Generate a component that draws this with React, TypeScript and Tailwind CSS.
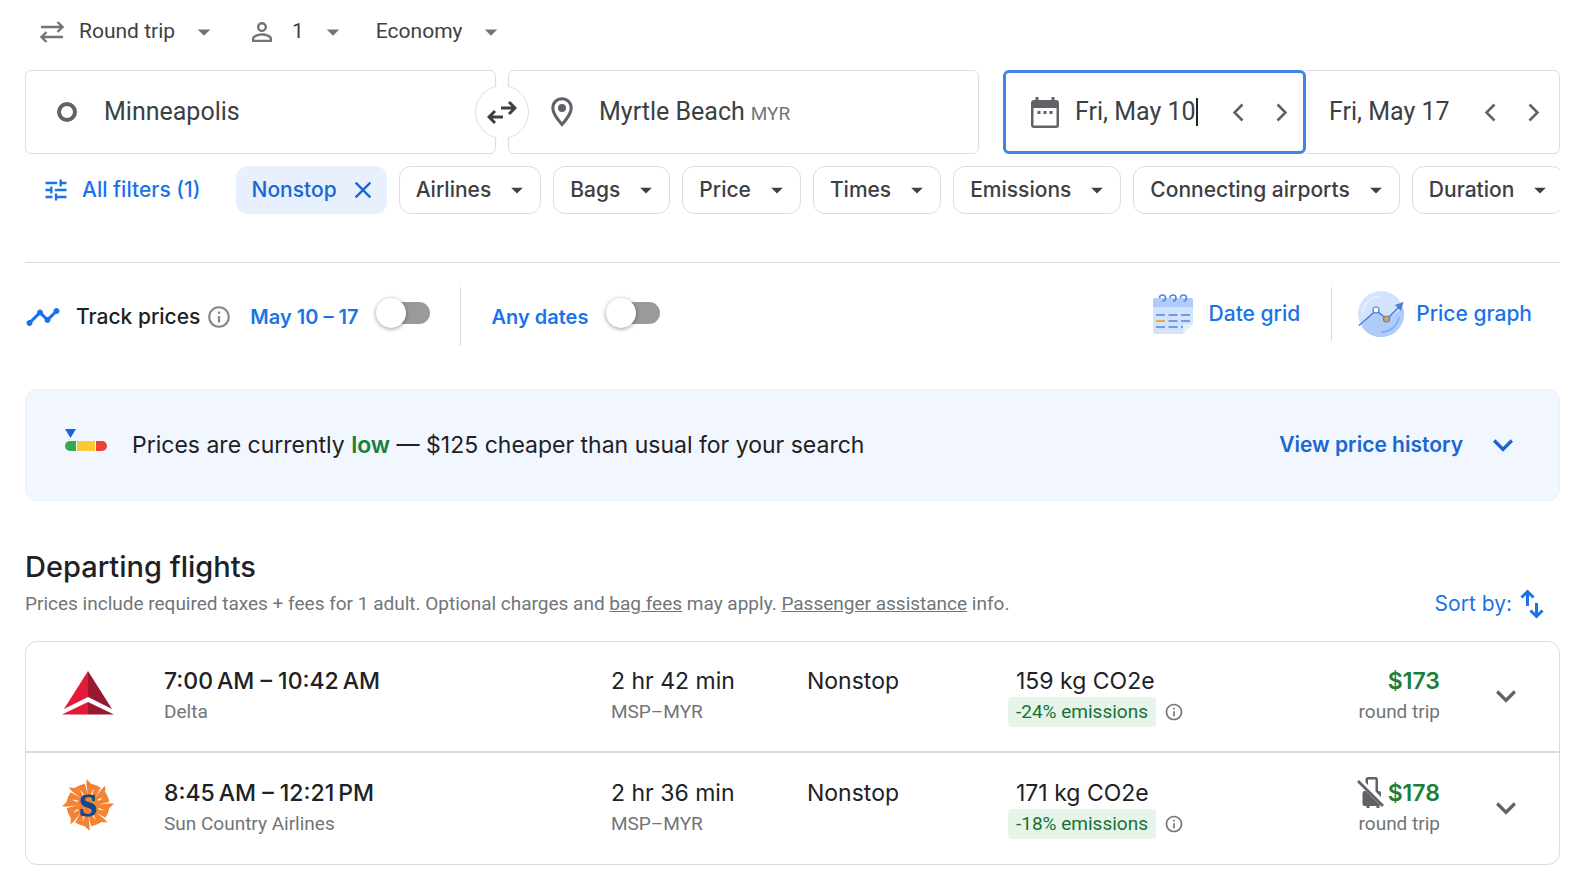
import React from 'react';
import { MdArrowDropDown, MdClose, MdExpandMore, MdInfoOutline, MdPersonOutline, MdTimeline, MdTune } from 'react-icons/md';

const tripOptions = [
  { label: 'Trip type', value: 'Round trip', others: ['One way', 'Multi-city'] },
  { label: 'Passengers', value: '1', others: ['2', '3', '4'] },
  { label: 'Seating class', value: 'Economy', others: ['Premium economy', 'Business', 'First'] },
];

const filters = ['Airlines', 'Bags', 'Price', 'Times', 'Emissions', 'Connecting airports', 'Duration'];

const RoundTripIcon = () => (
  <svg viewBox="0 0 24 24" className="h-6 w-6" fill="none" stroke="#70757a" strokeWidth="2.400" aria-hidden="true">
    <path d="M1 7h21M17.500 2l5 5-5 5M23 17H2M6.500 12l-5 5 5 5" />
  </svg>
);

const SwapIcon = () => (
  <svg viewBox="0 0 30 26" className="h-[26px] w-[30px]" fill="none" stroke="#3c4043" strokeWidth="3" aria-hidden="true">
    <path d="M14 9h14M22 3l6 6-6 6M16 18H2M8 12l-6 6 6 6" />
  </svg>
);

const PinIcon = () => (
  <svg viewBox="0 0 22 30" className="h-[30px] w-[22px] shrink-0" fill="none" aria-hidden="true">
    <path d="M11 1.700A9.200 9.200 0 0 0 1.800 11C1.800 17.500 11 27.500 11 27.500S20.200 17.500 20.200 11A9.200 9.200 0 0 0 11 1.700z" stroke="#5f6368" strokeWidth="3" />
    <circle cx="11" cy="11" r="4" fill="#5f6368" />
  </svg>
);

const CalendarIcon = () => (
  <svg viewBox="0 0 28 31" className="h-[31px] w-7" fill="#5f6368" aria-hidden="true">
    <path d="M4.500 0h3v3h13V0h3v3H25a3 3 0 0 1 3 3v22a3 3 0 0 1-3 3H3a3 3 0 0 1-3-3V6a3 3 0 0 1 3-3h1.500zM2.500 11v17.500h23V11z" />
    <path d="M6.500 14h3v3h-3zM12.500 14h3v3h-3zM18.500 14h3v3h-3z" />
  </svg>
);

const DateGridIcon = () => (
  <svg viewBox="0 0 40 40" className="h-10 w-10" fill="none" aria-hidden="true">
    <path d="M0 6a2 2 0 0 1 2-2h36a2 2 0 0 1 2 2v24L30 40H2a2 2 0 0 1-2-2z" fill="#d2e3fc" />
    <path d="M0 6a2 2 0 0 1 2-2h36a2 2 0 0 1 2 2v7H0z" fill="#aecbfa" />
    <path d="M30 40v-8a2 2 0 0 1 2-2h8z" fill="#e8f0fe" />
    <path
      d="M6.500 4a3 3 0 1 1 3 3M17 4a3 3 0 1 1 3 3M27.500 4a3 3 0 1 1 3 3"
      stroke="#5583dc"
      strokeWidth="1.500"
    />
    <path d="M3 21h9M15.500 21h9M28 21h9M15.500 27h9M28 27h9M3 33h9M15.500 33h9M28 33h2" stroke="#5583dc" strokeWidth="1.500" />
    <path d="M3 27h9" stroke="#e8ab4b" strokeWidth="2" />
  </svg>
);

const PriceGraphIcon = () => (
  <svg viewBox="0 0 46 46" className="h-[46px] w-[46px]" fill="none" aria-hidden="true">
    <circle cx="23" cy="23" r="23" fill="#d2e3fc" />
    <path d="M4 33.500 18 20l10.500 8.500L45.200 17A23 23 0 0 1 4 36z" fill="#aecbfa" />
    <path d="M5 23A18 18 0 0 1 22 5" stroke="#e8f0fe" strokeWidth="1.500" />
    <path d="M41 26a18 18 0 0 1-18 15" stroke="#7baaf7" strokeWidth="1.500" />
    <path d="m1 34.500 17-15 11 8.500 12-12" stroke="#4f7bd3" strokeWidth="1.500" />
    <path d="m37 14 8.500-3-2.500 9z" fill="#4f7bd3" />
    <circle cx="18" cy="19" r="3" fill="#fff" stroke="#4f7bd3" strokeWidth="1.200" />
    <circle cx="28.500" cy="28" r="3" fill="#e8a33d" stroke="#6b7fa8" strokeWidth="1.200" />
  </svg>
);

const PriceLevelIcon = () => (
  <svg viewBox="0 0 42 32" className="h-8 w-[42px]" aria-hidden="true">
    <path d="M0 0h11L5.500 9z" fill="#1967d2" />
    <path d="M5 12h6v10H5a5 5 0 0 1 0-10z" fill="#34a853" />
    <path d="M12 12h18v10H12z" fill="#fbc934" />
    <path d="M31 12h6a5 5 0 0 1 0 10h-6z" fill="#ea4335" />
  </svg>
);

const SortIcon = () => (
  <svg viewBox="0 0 24 30" className="h-[30px] w-6" fill="none" stroke="#1a73e8" strokeWidth="3" aria-hidden="true">
    <path d="M7.500 17V3M1.500 8.500l6-6 6 6M16.500 14v13M10.500 21.500l6 6 6-6" />
  </svg>
);

const NoCarryOnIcon = () => (
  <svg viewBox="0 0 27 31" className="h-[31px] w-[27px]" fill="#5f6368" role="img" aria-label="No carry-on bag">
    <path d="M8.500 5.500v-3A2.500 2.500 0 0 1 11 0h7.500A2.500 2.500 0 0 1 21 2.500V14h1a2 2 0 0 1 2 2v4L18.500 14.500V2.500H11V8z" />
    <path d="M9 14 23.500 28.500h-1V31h-3v-2h-7v2h-3v-2h-2a2 2 0 0 1-2-2V16a2 2 0 0 1 2-2z" />
    <path d="m0 5 2-2 25 25-2 2z" />
  </svg>
);

const DeltaLogo = () => (
  <svg viewBox="0 0 52 44" className="h-11 w-[52px]" aria-hidden="true">
    <path d="M26 0v26L2 38z" fill="#e51937" />
    <path d="M26 0v26l24 12z" fill="#991933" />
    <path d="M26 31v12.500H0z" fill="#e51937" />
    <path d="M26 31v12.500h26z" fill="#991933" />
  </svg>
);

const rays = [0, 45, 90, 135, 180, 225, 270, 315];

const SunCountryLogo = () => (
  <svg viewBox="0 0 52 52" className="h-[52px] w-[52px]" aria-hidden="true">
    <circle cx="26" cy="26" r="21.500" fill="#f58232" />
    {rays.map((angle) => (
      <g key={angle} transform={`rotate(${angle - 3} 26 26)`}>
        <path d="M25 8 26 0l5 6z" fill="#f58232" />
        <path d="M23.800 4h1.600l.800 11z" fill="#fff" />
        <path d="m31.800 9.500-2 6 1 .5zM20 10.500l2.200 5-1 .5z" fill="#fff" />
      </g>
    ))}
    <text
      x="26"
      y="36.500"
      textAnchor="middle"
      fontFamily="Liberation Serif, serif"
      fontWeight="bold"
      fontSize="32"
      fill="#0b4a8f"
      stroke="#0b4a8f"
    >
      S
    </text>
  </svg>
);

const flights = [
  {
    airline: 'Delta',
    logo: DeltaLogo,
    times: '7:00\u202fAM – 10:42\u202fAM',
    duration: '2 hr 42 min',
    co2: '159 kg CO2e',
    emissions: '-24% emissions',
    price: '$173',
    noCarryOn: false,
  },
  {
    airline: 'Sun Country Airlines',
    logo: SunCountryLogo,
    times: '8:45\u202fAM – 12:21\u202fPM',
    duration: '2 hr 36 min',
    co2: '171 kg CO2e',
    emissions: '-18% emissions',
    price: '$178',
    noCarryOn: true,
  },
];

const Toggle = ({ label }: { label: string }) => (
  <label className="flex cursor-pointer items-center gap-[18px]">
    <span className="text-xl font-semibold text-[#1a73e8]">{label}</span>
    <span className="relative mb-2 flex h-[30px] w-[54px] items-center justify-end">
      <input type="checkbox" className="peer sr-only" />
      <span className="h-[22px] w-11 rounded-full bg-[#9a9a9a] peer-checked:bg-blue-300" />
      <span className="absolute left-0 h-[30px] w-[30px] rounded-full bg-white shadow-[0_1px_4px_rgba(0,0,0,0.4)] peer-checked:left-6" />
    </span>
  </label>
);

const DateStepper = ({ name }: { name: string }) => (
  <div className="flex gap-[10px]">
    <button type="button" aria-label={`${name}, one day earlier`}>
      <svg viewBox="0 0 34 34" className="h-[34px] w-[34px]" fill="none" stroke="#5f6368" strokeWidth="2.600">
        <path d="m21.500 9.500-8 8 8 8" />
      </svg>
    </button>
    <button type="button" aria-label={`${name}, one day later`}>
      <svg viewBox="0 0 34 34" className="h-[34px] w-[34px]" fill="none" stroke="#5f6368" strokeWidth="2.600">
        <path d="m12.500 9.500 8 8-8 8" />
      </svg>
    </button>
  </div>
);

const SearchForm = () => (
  <form>
    <div className="flex h-16 items-center gap-7 pl-[15px]">
      {tripOptions.map((option, index) => (
        <label key={option.label} className="relative flex items-center gap-[15px]">
          {index === 0 && <RoundTripIcon />}
          {index === 1 && <MdPersonOutline size={30} className="text-[#70757a]" />}
          <select
            aria-label={option.label}
            defaultValue={option.value}
            className="field-sizing-content appearance-none bg-transparent pr-11 text-[21px] text-[#3c4043] outline-none"
          >
            <option>{option.value}</option>
            {option.others.map((other) => (
              <option key={other}>{other}</option>
            ))}
          </select>
          <MdArrowDropDown size={30} className="pointer-events-none absolute right-0 text-[#70757a]" />
        </label>
      ))}
    </div>

    <div className="mt-[6px] grid grid-cols-[954fr_557fr] gap-6 text-[25px] text-[#3c4043]">
      <div className="relative grid h-21 grid-cols-2 gap-3">
        <label className="flex min-w-0 items-center gap-[27px] rounded-md border border-[#dadce0] pl-[31px]">
          <span className="h-5 w-5 shrink-0 rounded-full border-4 border-[#5f6368]" />
          <input aria-label="Where from?" defaultValue="Minneapolis" className="w-full min-w-0 outline-none" />
        </label>
        <label className="flex min-w-0 items-center gap-[26px] rounded-md border border-[#dadce0] pl-[42px]">
          <PinIcon />
          <span className="flex items-baseline gap-[6px]">
            <input aria-label="Where to?" defaultValue="Myrtle Beach" className="field-sizing-content outline-none" />
            <span className="text-[19px] text-[#70757a]">MYR</span>
          </span>
        </label>
        <div className="absolute inset-y-0 left-1/2 flex w-[54px] -translate-x-1/2 items-center">
          <div className="h-[54px] w-full rounded-full border border-[#dadce0] bg-white" />
          <button
            type="button"
            aria-label="Swap origin and destination"
            className="absolute left-1/2 flex h-14 w-[10px] -translate-x-1/2 items-center justify-center bg-white"
          >
            <span className="shrink-0">
              <SwapIcon />
            </span>
          </button>
        </div>
      </div>

      <div className="grid h-21 grid-cols-[303fr_254fr]">
        <div className="flex items-center justify-between rounded-md border-[3px] border-[#4285e8] pr-1 pl-[25px]">
          <label className="flex items-center gap-4">
            <CalendarIcon />
            <span className="flex items-center">
              <input aria-label="Departure" defaultValue="Fri, May 10" className="field-sizing-content outline-none" />
              <span className="h-7 w-[2px] bg-[#202124]" />
            </span>
          </label>
          <DateStepper name="Departure" />
        </div>
        <div className="flex items-center justify-between rounded-r-md border border-l-0 border-[#dadce0] pr-2 pl-[23px]">
          <input aria-label="Return" defaultValue="Fri, May 17" className="field-sizing-content outline-none" />
          <DateStepper name="Return" />
        </div>
      </div>
    </div>
  </form>
);

const FilterBar = () => (
  <div className="mt-3 flex h-12 gap-3 overflow-hidden font-[Inter,sans-serif] text-[21px] font-medium whitespace-nowrap">
    <button type="button" className="mr-[23px] flex shrink-0 items-center gap-3 pl-[17px] text-[#1a73e8]">
      <MdTune size={28} />
      All filters (1)
    </button>
    <button type="button" className="flex shrink-0 items-center gap-3 rounded-xl bg-[#e8f0fe] pr-[10px] pl-4 text-[#1967d2]">
      Nonstop
      <MdClose size={28} />
    </button>
    {filters.map((filter) => (
      <button
        key={filter}
        type="button"
        className="flex shrink-0 items-center gap-3 rounded-xl border border-[#dadce0] pr-[9px] pl-4 text-[#3c4043]"
      >
        {filter}
        <MdArrowDropDown size={28} />
      </button>
    ))}
  </div>
);

const TrackPrices = () => (
  <section className="mt-12 flex justify-between border-t border-[#dadce0] pt-6 font-[Inter,sans-serif]">
    <div className="flex h-[59px] items-center">
      <MdTimeline size={36} className="text-[#1a73e8]" />
      <h2 className="ml-[15px] text-[21px] font-medium text-[#202124]">Track prices</h2>
      <MdInfoOutline size={26} className="mr-[18px] ml-[6px] text-[#80868b]" aria-label="About price tracking" />
      <Toggle label="May 10 – 17" />
      <span className="mx-[30px] h-full border-l border-[#dadce0]" />
      <Toggle label="Any dates" />
    </div>
    <div className="flex h-[54px] items-center pr-7 text-[21px] font-medium text-[#1a73e8]">
      <button type="button" className="flex items-center gap-4">
        <DateGridIcon />
        Date grid
      </button>
      <span className="mr-[26px] ml-[31px] h-full border-l border-[#dadce0]" />
      <button type="button" className="flex items-center gap-3">
        <PriceGraphIcon />
        Price graph
      </button>
    </div>
  </section>
);

const PriceInsight = () => (
  <section className="mt-[43px] flex h-28 items-center rounded-xl border border-[#e8f0fe] bg-[#f2f6fe] pr-9 pl-[39px] font-[Inter,sans-serif]">
    <PriceLevelIcon />
    <p className="ml-[25px] text-[23px] text-[#202124]">
      Prices are currently <strong className="font-semibold text-[#188038]">low</strong> — $125 cheaper than usual for your
      search
    </p>
    <button type="button" className="ml-auto flex items-center gap-5 text-[21px] font-semibold text-[#1967d2]">
      View price history
      <MdExpandMore size={40} />
    </button>
  </section>
);

const FlightList = () => (
  <section className="mt-12">
    <div className="flex items-end justify-between">
      <div>
        <h2 className="font-[Inter,sans-serif] text-[29px] leading-9 font-medium text-[#202124]">Departing flights</h2>
        <p className="mt-[7px] text-[19px] leading-6 text-[#70757a]">
          Prices include required taxes + fees for 1 adult. Optional charges and{' '}
          <a href="#bag-fees" className="underline">
            bag fees
          </a>{' '}
          may apply.{' '}
          <a href="#assistance" className="underline">
            Passenger assistance
          </a>{' '}
          info.
        </p>
      </div>
      <button type="button" className="flex h-6 items-center gap-2 pr-4 font-[Inter,sans-serif] text-[21px] text-[#1a73e8]">
        Sort by:
        <SortIcon />
      </button>
    </div>

    <ul className="mt-[25px] divide-y-2 divide-[#dadce0] rounded-xl border border-[#dadce0]">
      {flights.map((flight) => (
        <li
          key={flight.airline}
          className="grid h-[111px] grid-cols-[138px_447fr_196fr_201fr_240fr_192px_119px] items-center pb-[2px] text-[#202124]"
        >
          <div className="mb-[5px] pl-9">
            <flight.logo />
          </div>
          <div>
            <p className="font-[Inter,sans-serif] text-[23px] leading-8 font-medium">{flight.times}</p>
            <p className="text-[19px] leading-[30px] text-[#70757a]">{flight.airline}</p>
          </div>
          <div>
            <p className="font-[Inter,sans-serif] text-[23px] leading-8">{flight.duration}</p>
            <p className="text-[19px] leading-[30px] text-[#70757a]">MSP–MYR</p>
          </div>
          <p className="mb-[30px] font-[Inter,sans-serif] text-[23px] leading-8">Nonstop</p>
          <div>
            <p className="pl-2 font-[Inter,sans-serif] text-[23px] leading-8">{flight.co2}</p>
            <div className="flex items-center gap-2">
              <span className="rounded bg-[#e6f4ea] px-2 text-[19px] leading-[30px] text-[#137333]">{flight.emissions}</span>
              <MdInfoOutline size={20} className="text-[#70757a]" aria-label="About emissions" />
            </div>
          </div>
          <div className="text-right">
            <div className="flex items-center justify-end gap-1 font-[Inter,sans-serif] text-[23px] leading-8 font-semibold text-[#188038]">
              {flight.noCarryOn && <NoCarryOnIcon />}
              {flight.price}
            </div>
            <p className="text-[19px] leading-[30px] text-[#70757a]">round trip</p>
          </div>
          <button type="button" aria-label={`${flight.airline} flight details`} className="pl-[46px] text-[#5f6368]">
            <MdExpandMore size={40} />
          </button>
        </li>
      ))}
    </ul>
  </section>
);

const App = () => {
  return (
    <main className="bg-white pr-8 pb-[27px] pl-[25px] font-[Roboto,sans-serif]">
      <SearchForm />
      <FilterBar />
      <TrackPrices />
      <PriceInsight />
      <FlightList />
    </main>
  );
};

export default App;
